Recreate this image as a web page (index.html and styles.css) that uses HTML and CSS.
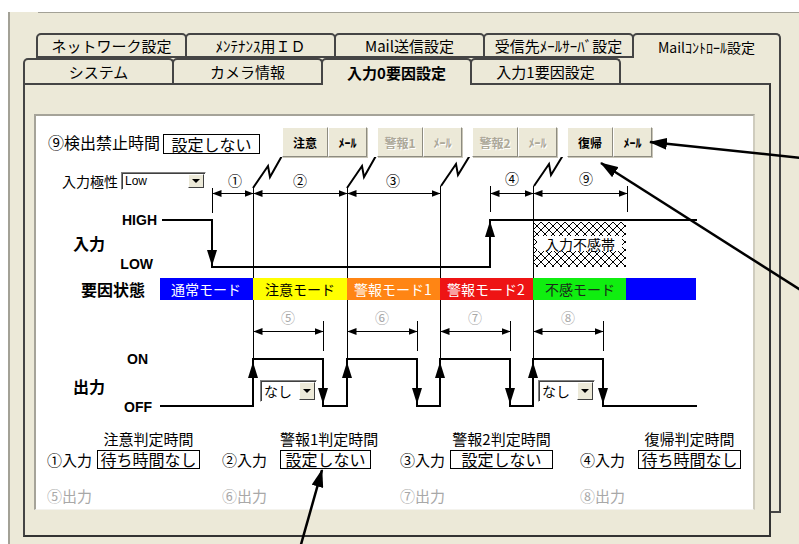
FILE: index.html
```html
<!DOCTYPE html>
<html lang="ja">
<head>
  <meta charset="UTF-8">
  <title>入力0要因設定</title>
  <link rel="stylesheet" href="styles.css">
</head>
<body>
  <div class="frame">
    <div class="frame-rule"></div>
    <div class="tabstack">
      <!-- back row of tabs -->
      <div class="deck deck-back">
        <div class="tabs">
          <div class="tab">ネットワーク設定</div>
          <div class="tab">ﾒﾝﾃﾅﾝｽ用ＩＤ</div>
          <div class="tab">Mail送信設定</div>
          <div class="tab">受信先ﾒｰﾙｻｰﾊﾞ設定</div>
          <div class="tab tab-open tab-last tab-small">Mailｺﾝﾄﾛｰﾙ設定</div>
        </div>
        <div class="sheet sheet-back"></div>
      </div>

      <!-- front row of tabs -->
      <div class="deck deck-front">
        <div class="tabs">
          <div class="tab">システム</div>
          <div class="tab">カメラ情報</div>
          <div class="tab tab-active">入力0要因設定</div>
          <div class="tab">入力1要因設定</div>
        </div>
        <div class="sheet sheet-front">
          <div class="canvas">

            <div class="ctrl-row">
              <span class="ctrl-label">⑨検出禁止時間</span>
              <span class="valbox valbox-top">設定しない</span>
              <div class="btn-group btn-group-first">
                <button class="btn btn-wide">注意</button>
                <button class="btn btn-mail">ﾒｰﾙ</button>
              </div>
              <div class="btn-group">
                <button class="btn btn-wide" disabled>警報1</button>
                <button class="btn btn-mail" disabled>ﾒｰﾙ</button>
              </div>
              <div class="btn-group">
                <button class="btn btn-wide" disabled>警報2</button>
                <button class="btn btn-mail" disabled>ﾒｰﾙ</button>
              </div>
              <div class="btn-group">
                <button class="btn btn-wide">復帰</button>
                <button class="btn btn-mail">ﾒｰﾙ</button>
              </div>
            </div>

            <div class="diagram">
              <svg class="chart" width="719" height="260" viewBox="36 157 719 260">
                <defs>
                  <marker id="dim" viewBox="0 0 9 7" refX="9" refY="3.5" markerWidth="9" markerHeight="7" markerUnits="userSpaceOnUse" orient="auto-start-reverse">
                    <path d="M0 0L9 3.5L0 7z"/>
                  </marker>
                  <marker id="sig" viewBox="0 0 16 10" refX="16" refY="5" markerWidth="16" markerHeight="10" markerUnits="userSpaceOnUse" orient="auto">
                    <path d="M0 0L16 5L0 10z"/>
                  </marker>
                  <pattern id="mesh" width="8" height="8" patternUnits="userSpaceOnUse" x="533" y="222">
                    <path d="M0 0L8 8M8 0L0 8" stroke="#000" stroke-width="1"/>
                  </pattern>
                </defs>

                <!-- guide lines -->
                <g fill="none" stroke="#000" stroke-width="1">
                  <path d="M253.5 186V406M347.5 186V406M440.5 186V406M533.5 186V406"/>
                  <path d="M212.5 188V213M490.5 186V212M627.5 186V212"/>
                  <path d="M323.5 321V351M417.5 321V351M510.5 321V351M603.5 321V351"/>
                </g>

                <!-- time spans -->
                <g stroke="#000" stroke-width="1" marker-start="url(#dim)" marker-end="url(#dim)">
                  <line x1="212.5" y1="193.5" x2="253.5" y2="193.5"/>
                  <line x1="253.5" y1="193.5" x2="347.5" y2="193.5"/>
                  <line x1="347.5" y1="193.5" x2="440.5" y2="193.5"/>
                  <line x1="490.5" y1="193.5" x2="533.5" y2="193.5"/>
                  <line x1="533.5" y1="193.5" x2="627.5" y2="193.5"/>
                  <line x1="253.5" y1="331.5" x2="323.5" y2="331.5"/>
                  <line x1="347.5" y1="331.5" x2="417.5" y2="331.5"/>
                  <line x1="440.5" y1="331.5" x2="510.5" y2="331.5"/>
                  <line x1="533.5" y1="331.5" x2="603.5" y2="331.5"/>
                </g>

                <!-- event bolts -->
                <g fill="none" stroke="#000" stroke-width="2">
                  <path d="M253 188L268 166L270 177L283 154"/>
                  <path d="M347 188L362 166L364 177L377 154"/>
                  <path d="M441 186L456 164L458 175L472 152"/>
                  <path d="M534 186L549 164L551 175L565 152"/>
                </g>

                <text class="num" x="235" y="180">①</text>
                <text class="num" x="300" y="180">②</text>
                <text class="num" x="393" y="180">③</text>
                <text class="num" x="512" y="178">④</text>
                <text class="num" x="586" y="178">⑨</text>

                <!-- input -->
                <text class="en" x="157" y="220" text-anchor="end">HIGH</text>
                <text class="jp-bold" x="89" y="243">入力</text>
                <text class="en" x="153" y="264" text-anchor="end">LOW</text>

                <rect x="533" y="222" width="93" height="45" fill="url(#mesh)"/>
                <rect x="537" y="236" width="85" height="15" fill="#fff"/>
                <text class="mode" x="580" y="244">入力不感帯</text>

                <g fill="none" stroke="#000" stroke-width="2">
                  <path d="M162 220H212V267H490V220H697"/>
                  <line x1="212" y1="240" x2="212" y2="266" marker-end="url(#sig)"/>
                  <line x1="490" y1="250" x2="490" y2="221" marker-end="url(#sig)"/>
                </g>

                <!-- state bar -->
                <text class="jp-bold" x="113" y="289">要因状態</text>
                <rect x="160" y="278" width="93" height="22" fill="#0000ff"/>
                <rect x="253" y="278" width="94" height="22" fill="#ffff00"/>
                <rect x="347" y="278" width="93" height="22" fill="#ff8514"/>
                <rect x="440" y="278" width="93" height="22" fill="#ee1414"/>
                <rect x="533" y="278" width="93" height="22" fill="#10ee10"/>
                <rect x="626" y="278" width="70" height="22" fill="#0000ff"/>
                <text class="mode mode-light" x="206" y="289">通常モード</text>
                <text class="mode" x="300" y="289">注意モード</text>
                <text class="mode mode-light" x="393" y="289">警報モード1</text>
                <text class="mode mode-light" x="486" y="289">警報モード2</text>
                <text class="mode mode-dark" x="580" y="289">不感モード</text>

                <text class="num num-dim" x="288" y="317">⑤</text>
                <text class="num num-dim" x="382" y="317">⑥</text>
                <text class="num num-dim" x="475" y="317">⑦</text>
                <text class="num num-dim" x="568" y="317">⑧</text>

                <!-- output -->
                <text class="en" x="148" y="359" text-anchor="end">ON</text>
                <text class="jp-bold" x="89" y="386">出力</text>
                <text class="en" x="152" y="407" text-anchor="end">OFF</text>

                <g fill="none" stroke="#000" stroke-width="2">
                  <path d="M160 406H253V359H323V406H347V359H417V406H440V359H510V406H533V359H603V406H697"/>
                  <line x1="253" y1="392" x2="253" y2="362" marker-end="url(#sig)"/>
                  <line x1="347" y1="392" x2="347" y2="362" marker-end="url(#sig)"/>
                  <line x1="440" y1="392" x2="440" y2="362" marker-end="url(#sig)"/>
                  <line x1="533" y1="392" x2="533" y2="362" marker-end="url(#sig)"/>
                  <line x1="323" y1="372" x2="323" y2="404" marker-end="url(#sig)"/>
                  <line x1="417" y1="372" x2="417" y2="404" marker-end="url(#sig)"/>
                  <line x1="510" y1="372" x2="510" y2="404" marker-end="url(#sig)"/>
                  <line x1="603" y1="372" x2="603" y2="404" marker-end="url(#sig)"/>
                </g>
              </svg>

              <div class="polarity">
                <span class="polarity-label">入力極性</span>
                <div class="combo combo-polarity">
                  <span>Low</span>
                  <span class="combo-arrow"></span>
                </div>
              </div>

              <div class="combo combo-out combo-out-a">
                <span>なし</span>
                <span class="combo-arrow"></span>
              </div>
              <div class="combo combo-out combo-out-b">
                <span>なし</span>
                <span class="combo-arrow"></span>
              </div>
            </div>

            <div class="judge">
              <div class="judge-col">
                <div class="judge-title">注意判定時間</div>
                <div class="judge-label">①入力</div>
                <div class="judge-box">待ち時間なし</div>
                <div class="judge-out">⑤出力</div>
              </div>
              <div class="judge-col judge-col-wide">
                <div class="judge-title">警報1判定時間</div>
                <div class="judge-label">②入力</div>
                <div class="judge-box judge-box-short">設定しない</div>
                <div class="judge-out">⑥出力</div>
              </div>
              <div class="judge-col">
                <div class="judge-title">警報2判定時間</div>
                <div class="judge-label">③入力</div>
                <div class="judge-box">設定しない</div>
                <div class="judge-out">⑦出力</div>
              </div>
              <div class="judge-col judge-col-wide">
                <div class="judge-title">復帰判定時間</div>
                <div class="judge-label">④入力</div>
                <div class="judge-box">待ち時間なし</div>
                <div class="judge-out">⑧出力</div>
              </div>
            </div>

          </div>
        </div>
      </div>
    </div>
  </div>

  <!-- callout arrows drawn over the screenshot -->
  <svg class="callouts" width="799" height="544" viewBox="0 0 799 544">
    <defs>
      <marker id="callout-head" viewBox="0 0 18 12" refX="17" refY="6" markerWidth="18" markerHeight="12" markerUnits="userSpaceOnUse" orient="auto">
        <path d="M0 0L18 6L0 12z"/>
      </marker>
    </defs>
    <g stroke="#000" stroke-width="2.5" marker-end="url(#callout-head)">
      <line x1="802" y1="158" x2="650" y2="142"/>
      <line x1="802" y1="291" x2="601" y2="163"/>
      <line x1="300" y1="548" x2="322" y2="470"/>
    </g>
  </svg>
</body>
</html>
```

FILE: styles.css
```css
* {
  box-sizing: border-box;
}

body {
  margin: 0;
  width: 799px;
  height: 544px;
  overflow: hidden;
  position: relative;
  background: #fff;
  color: #000;
  font-family: "Noto Sans CJK JP", sans-serif;
}

/* window frame */
.frame {
  margin: 12px 0 0 8px;
  height: 532px;
  background: #ece9d8;
  border-left: 2px solid #a3a196;
}

.frame-rule {
  margin-left: 28px;
  border-top: 1px solid #a3a196;
}

/* two stacked tab rows */
.tabstack {
  display: grid;
  margin: 20px 0 0 13px;
}

.deck {
  grid-area: 1 / 1;
  display: flex;
  flex-direction: column;
}
.deck-back {
  margin-left: 13px;
  width: 745px;
}
.deck-front {
  margin-top: 25px;
  width: 748px;
}

.tabs {
  display: flex;
  height: 25px;
}

.tab {
  width: 151px;
  height: 25px;
  margin-right: -2px;
  display: flex;
  align-items: center;
  justify-content: center;
  background: #ece9d8;
  border: 2px solid #454545;
  border-radius: 5px 5px 0 0;
  font-size: 15px;
  line-height: 1;
}
.deck-front .tab {
  border-bottom: none;
}
.tab-open {
  border-bottom: none;
}
.tab-last {
  width: 149px;
}
.tab-small {
  font-size: 14px;
}
.tab-active {
  position: relative;
  height: 27px;
  margin-bottom: -2px;
  font-weight: bold;
}

.sheet {
  background: #ece9d8;
}
.sheet-back {
  height: 455px;
  border-right: 2px solid #454545;
  border-bottom: 2px solid #454545;
}
.sheet-front {
  height: 454px;
  border: 2px solid #454545;
  border-right-color: #333;
  border-bottom-color: #333;
  padding: 29px 0 0 9px;
}

/* white drawing area */
.canvas {
  width: 721px;
  height: 396px;
  background: #fff;
  border-top: 2px solid #a5a399;
  border-left: 2px solid #a5a399;
  border-right: 2px solid #cfccbe;
  border-bottom: 1px solid #f4f3ee;
}

.ctrl-row {
  display: flex;
  align-items: center;
  height: 30px;
  margin-top: 11px;
  padding-left: 12px;
}

.ctrl-label {
  font-size: 16px;
  line-height: 18px;
}

.valbox-top {
  width: 97px;
  height: 20px;
  margin: 4px 0 0 3px;
  border: 1px solid #000;
  font-size: 16px;
  line-height: 18px;
  text-align: center;
}

.btn-group {
  display: flex;
  margin-left: 10px;
}
.btn-group-first {
  margin-left: 22px;
}

.btn {
  height: 30px;
  padding: 0;
  background: #ece9d8;
  border: 1px solid;
  border-color: #fff #8d8b80 #8d8b80 #fff;
  box-shadow: 1px 1px 0 #c9c6b8;
  font-family: "Noto Sans CJK JP", sans-serif;
  font-size: 12px;
  font-weight: bold;
  color: #000;
}
.btn:disabled {
  color: #aca899;
  text-shadow: 1px 1px 0 #fff;
}
.btn-wide {
  width: 46px;
}
.btn-mail {
  width: 39px;
}

/* timing diagram */
.diagram {
  position: relative;
  height: 260px;
}

.chart {
  position: absolute;
  top: 0;
  left: 0;
}
.chart text {
  font-family: "Noto Sans CJK JP", sans-serif;
  font-size: 14px;
  text-anchor: middle;
  dominant-baseline: central;
}
.chart .en {
  font-family: "Liberation Sans", sans-serif;
  font-weight: bold;
  text-anchor: end;
}
.chart .jp-bold {
  font-size: 16px;
  font-weight: bold;
}
.chart .num-dim {
  fill: #a8a8a8;
}
.chart .mode-light {
  fill: #fff;
}
.chart .mode-dark {
  fill: #1a2a1a;
}

.polarity {
  display: flex;
  align-items: center;
  gap: 3px;
  padding: 15px 0 0 26px;
}
.polarity-label {
  font-size: 14px;
  line-height: 18px;
}

.combo {
  display: flex;
  align-items: stretch;
  justify-content: space-between;
  background: #fff;
  border: 1px solid;
  border-color: #808080 #fff #fff #808080;
  box-shadow: inset 1px 1px 0 #404040;
  padding: 1px 1px 1px 3px;
}
.combo span:first-child {
  display: flex;
  align-items: center;
}
.combo-arrow {
  width: 16px;
  display: flex;
  align-items: center;
  justify-content: center;
  background: #ece9d8;
  border: 1px solid;
  border-color: #fff #404040 #404040 #fff;
}
.combo-arrow::after {
  content: "";
  border-left: 4px solid transparent;
  border-right: 4px solid transparent;
  border-top: 4px solid #000;
}

.combo-polarity {
  width: 85px;
  height: 18px;
  font-family: "Liberation Sans", sans-serif;
  font-size: 12px;
}

.combo-out {
  position: absolute;
  top: 223px;
  width: 57px;
  height: 22px;
  font-size: 14px;
}
.combo-out-a {
  left: 224px;
}
.combo-out-b {
  left: 502px;
}

/* judgement times */
.judge {
  display: grid;
  grid-template-columns: 175px 178px 180px 1fr;
  margin-top: 13px;
  padding-left: 11px;
  font-size: 15px;
}

.judge-col {
  display: grid;
  grid-template-columns: auto auto;
  justify-content: start;
  column-gap: 5px;
}
.judge-col-wide {
  column-gap: 13px;
}

.judge-title {
  grid-column: 2;
  justify-self: center;
  white-space: nowrap;
  line-height: 17px;
}
.judge-label {
  margin-top: 3px;
  line-height: 19px;
}
.judge-box {
  width: 103px;
  height: 19px;
  margin-top: 3px;
  border: 1px solid #000;
  font-size: 16px;
  line-height: 17px;
  text-align: center;
}
.judge-box-short {
  width: 91px;
}
.judge-out {
  grid-column: 1 / span 2;
  margin-top: 18px;
  line-height: 17px;
  color: #a8a8a8;
}

.callouts {
  position: absolute;
  top: 0;
  left: 0;
  pointer-events: none;
}
```
